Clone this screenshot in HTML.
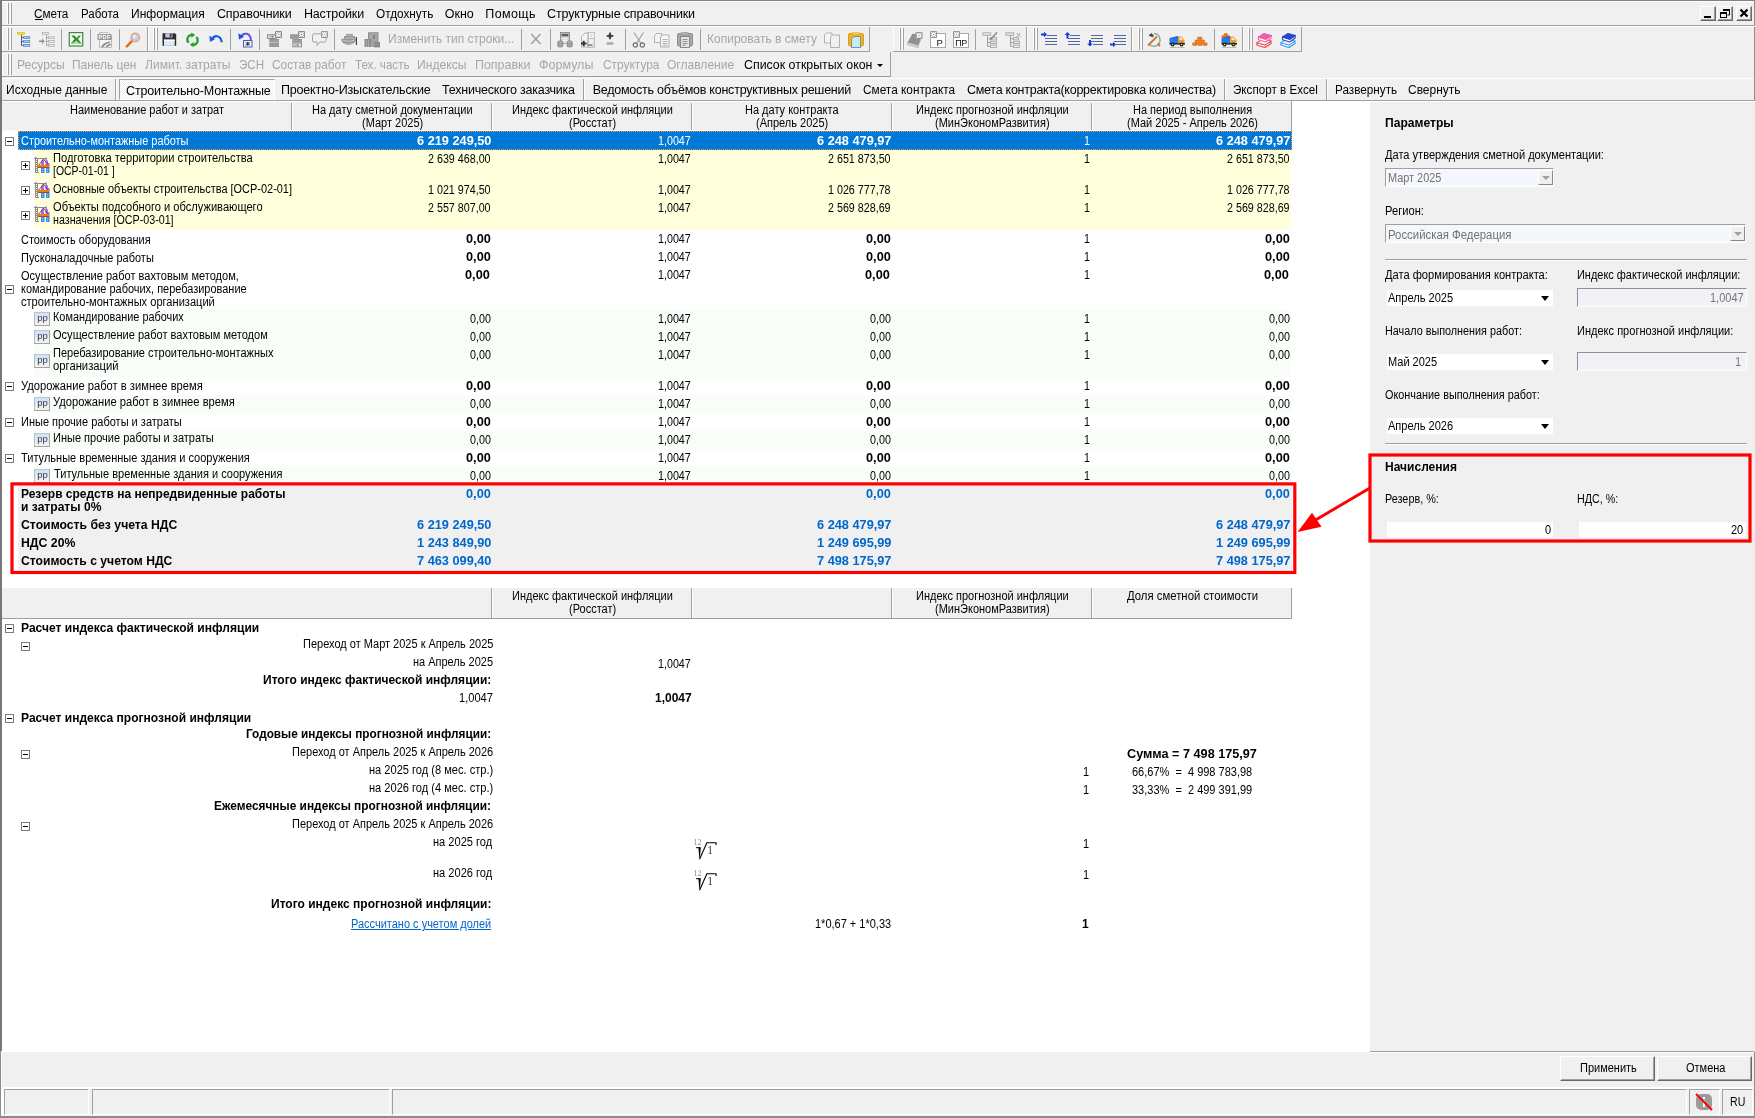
<!DOCTYPE html>
<html lang="ru"><head><meta charset="utf-8"><title>Смета</title><style>
html,body{margin:0;padding:0}
body{will-change:transform;width:1755px;height:1118px;overflow:hidden;background:#f0f0f0;position:relative;font-family:"Liberation Sans",sans-serif;color:#000}
body div,body span,body svg{position:absolute;box-sizing:border-box}
.t{font-size:12.5px;line-height:13px;white-space:pre}
.m{font-size:12px;line-height:14px;white-space:pre}
</style></head><body>
<div style="left:0px;top:0px;width:1755px;height:1px;background:#828282"></div>
<div style="left:2px;top:1px;width:1752px;height:1px;background:#fff"></div>
<div style="left:1754px;top:0px;width:1px;height:1116px;background:#8c8c8c"></div>
<div style="left:0px;top:0px;width:2px;height:1051px;background:#787878"></div>
<div style="left:7px;top:3px;width:1px;height:21px;background:#fff"></div>
<div style="left:8px;top:3px;width:1px;height:21px;background:#a0a0a0"></div>
<div style="left:10px;top:3px;width:1px;height:21px;background:#fff"></div>
<div style="left:11px;top:3px;width:1px;height:21px;background:#a0a0a0"></div>
<span class="m" style="top:7.00px;font-size:12.5px;left:34.3px;transform:scaleX(0.9372);transform-origin:0 0;">Смета</span>
<span class="m" style="top:7.00px;font-size:12.5px;left:80.8px;transform:scaleX(0.9188);transform-origin:0 0;">Работа</span>
<span class="m" style="top:7.00px;font-size:12.5px;left:130.9px;transform:scaleX(0.9641);transform-origin:0 0;">Информация</span>
<span class="m" style="top:7.00px;font-size:12.5px;letter-spacing:-0.093px;left:216.9px;">Справочники</span>
<span class="m" style="top:7.00px;font-size:12.5px;letter-spacing:-0.125px;left:303.9px;">Настройки</span>
<span class="m" style="top:7.00px;font-size:12.5px;left:375.8px;transform:scaleX(0.9427);transform-origin:0 0;">Отдохнуть</span>
<span class="m" style="top:7.00px;font-size:12.5px;letter-spacing:-0.049px;left:444.8px;">Окно</span>
<span class="m" style="top:7.00px;font-size:12.5px;letter-spacing:0.384px;left:485.3px;">Помощь</span>
<span class="m" style="top:7.00px;font-size:12.5px;letter-spacing:-0.165px;left:547.1px;">Структурные справочники</span>
<div style="left:35px;top:19px;width:8px;height:1px;background:#000"></div>
<div style="left:2px;top:25px;width:1753px;height:1px;background:#a0a0a0"></div>
<div style="left:2px;top:26px;width:1753px;height:1px;background:#fff"></div>
<div style="left:1700px;top:6px;width:16px;height:15px;background:#f0f0f0;border:1px solid #fff;border-right-color:#696969;border-bottom-color:#696969"><div style="left:0;top:0;right:0;bottom:0;border-right:1px solid #a0a0a0;border-bottom:1px solid #a0a0a0"></div><svg style="left:0;top:0" width="14" height="13" viewBox="0 0 14 13"><rect x="3" y="9" width="7" height="2" fill="#000"/></svg></div>
<div style="left:1717px;top:6px;width:16px;height:15px;background:#f0f0f0;border:1px solid #fff;border-right-color:#696969;border-bottom-color:#696969"><div style="left:0;top:0;right:0;bottom:0;border-right:1px solid #a0a0a0;border-bottom:1px solid #a0a0a0"></div><svg style="left:0;top:0" width="14" height="13" viewBox="0 0 14 13"><path d="M5.500 3h6v5h-2" fill="none" stroke="#000" stroke-width="1"/><rect x="5" y="2" width="7" height="2" fill="#000"/><rect x="2.500" y="6.500" width="6" height="4" fill="none" stroke="#000" stroke-width="1"/><rect x="2" y="5" width="7" height="2" fill="#000"/></svg></div>
<div style="left:1736px;top:6px;width:16px;height:15px;background:#f0f0f0;border:1px solid #fff;border-right-color:#696969;border-bottom-color:#696969"><div style="left:0;top:0;right:0;bottom:0;border-right:1px solid #a0a0a0;border-bottom:1px solid #a0a0a0"></div><svg style="left:0;top:0" width="14" height="13" viewBox="0 0 14 13"><path d="M3.500 2.500l7 7M10.500 2.500l-7 7" stroke="#000" stroke-width="2.200"/></svg></div>
<div style="left:2px;top:51px;width:146px;height:1px;background:#a0a0a0"></div>
<div style="left:147px;top:27px;width:1px;height:25px;background:#a0a0a0"></div>
<div style="left:2px;top:27px;width:1px;height:24px;background:#fff"></div>
<div style="left:148px;top:51px;width:722px;height:1px;background:#a0a0a0"></div>
<div style="left:869px;top:27px;width:1px;height:25px;background:#a0a0a0"></div>
<div style="left:148px;top:27px;width:1px;height:24px;background:#fff"></div>
<div style="left:893px;top:51px;width:134px;height:1px;background:#a0a0a0"></div>
<div style="left:1026px;top:27px;width:1px;height:25px;background:#a0a0a0"></div>
<div style="left:893px;top:27px;width:1px;height:24px;background:#fff"></div>
<div style="left:1027px;top:51px;width:105px;height:1px;background:#a0a0a0"></div>
<div style="left:1131px;top:27px;width:1px;height:25px;background:#a0a0a0"></div>
<div style="left:1027px;top:27px;width:1px;height:24px;background:#fff"></div>
<div style="left:1132px;top:51px;width:111px;height:1px;background:#a0a0a0"></div>
<div style="left:1242px;top:27px;width:1px;height:25px;background:#a0a0a0"></div>
<div style="left:1132px;top:27px;width:1px;height:24px;background:#fff"></div>
<div style="left:1243px;top:51px;width:59px;height:1px;background:#a0a0a0"></div>
<div style="left:1301px;top:27px;width:1px;height:25px;background:#a0a0a0"></div>
<div style="left:1243px;top:27px;width:1px;height:24px;background:#fff"></div>
<div style="left:7px;top:28px;width:1px;height:22px;background:#fff"></div>
<div style="left:8px;top:28px;width:1px;height:22px;background:#a0a0a0"></div>
<div style="left:10px;top:28px;width:1px;height:22px;background:#fff"></div>
<div style="left:11px;top:28px;width:1px;height:22px;background:#a0a0a0"></div>
<div style="left:153px;top:28px;width:1px;height:22px;background:#fff"></div>
<div style="left:154px;top:28px;width:1px;height:22px;background:#a0a0a0"></div>
<div style="left:156px;top:28px;width:1px;height:22px;background:#fff"></div>
<div style="left:157px;top:28px;width:1px;height:22px;background:#a0a0a0"></div>
<div style="left:899px;top:28px;width:1px;height:22px;background:#fff"></div>
<div style="left:900px;top:28px;width:1px;height:22px;background:#a0a0a0"></div>
<div style="left:902px;top:28px;width:1px;height:22px;background:#fff"></div>
<div style="left:903px;top:28px;width:1px;height:22px;background:#a0a0a0"></div>
<div style="left:1033px;top:28px;width:1px;height:22px;background:#fff"></div>
<div style="left:1034px;top:28px;width:1px;height:22px;background:#a0a0a0"></div>
<div style="left:1036px;top:28px;width:1px;height:22px;background:#fff"></div>
<div style="left:1037px;top:28px;width:1px;height:22px;background:#a0a0a0"></div>
<div style="left:1138px;top:28px;width:1px;height:22px;background:#fff"></div>
<div style="left:1139px;top:28px;width:1px;height:22px;background:#a0a0a0"></div>
<div style="left:1141px;top:28px;width:1px;height:22px;background:#fff"></div>
<div style="left:1142px;top:28px;width:1px;height:22px;background:#a0a0a0"></div>
<div style="left:1248px;top:28px;width:1px;height:22px;background:#fff"></div>
<div style="left:1249px;top:28px;width:1px;height:22px;background:#a0a0a0"></div>
<div style="left:1251px;top:28px;width:1px;height:22px;background:#fff"></div>
<div style="left:1252px;top:28px;width:1px;height:22px;background:#a0a0a0"></div>
<div style="left:61px;top:29px;width:1px;height:21px;background:#a0a0a0"></div>
<div style="left:90px;top:29px;width:1px;height:21px;background:#a0a0a0"></div>
<div style="left:119px;top:29px;width:1px;height:21px;background:#a0a0a0"></div>
<div style="left:230px;top:29px;width:1px;height:21px;background:#a0a0a0"></div>
<div style="left:259px;top:29px;width:1px;height:21px;background:#a0a0a0"></div>
<div style="left:334px;top:29px;width:1px;height:21px;background:#a0a0a0"></div>
<div style="left:521px;top:29px;width:1px;height:21px;background:#a0a0a0"></div>
<div style="left:550px;top:29px;width:1px;height:21px;background:#a0a0a0"></div>
<div style="left:625px;top:29px;width:1px;height:21px;background:#a0a0a0"></div>
<div style="left:700px;top:29px;width:1px;height:21px;background:#a0a0a0"></div>
<div style="left:975px;top:29px;width:1px;height:21px;background:#a0a0a0"></div>
<div style="left:1214px;top:29px;width:1px;height:21px;background:#a0a0a0"></div>
<svg style="left:16px;top:32px" width="16" height="16" viewBox="0 0 16 16"><path d="M5.500 2.500v11M5.500 5.500h2M5.500 9.500h2M5.500 13.300h2" stroke="#384c80" fill="none" stroke-width="0.900"/><rect x="1.300" y="0.400" width="7.200" height="1.900" fill="#f4e61c" stroke="#c8b400" stroke-width="0.500"/><rect x="7.600" y="4.700" width="6.200" height="1.900" fill="#a4c8f4" stroke="#5080c8" stroke-width="0.700"/><rect x="7.600" y="8.600" width="6.200" height="1.900" fill="#a4c8f4" stroke="#5080c8" stroke-width="0.700"/><rect x="7.600" y="12.400" width="6.200" height="1.900" fill="#a4c8f4" stroke="#5080c8" stroke-width="0.700"/></svg>
<svg style="left:39px;top:32px" width="16" height="16" viewBox="0 0 16 16"><path d="M7.500 2.500v11M7.500 5.500h2M7.500 9.500h2M7.500 13.300h2" stroke="#a0a0a0" fill="none" stroke-width="0.900"/><rect x="3.600" y="0.400" width="6" height="1.900" fill="#ececec" stroke="#a8a8a8" stroke-width="0.700"/><rect x="9.600" y="4.700" width="6" height="1.900" fill="#ececec" stroke="#a8a8a8" stroke-width="0.700"/><rect x="9.600" y="8.600" width="6" height="1.900" fill="#ececec" stroke="#a8a8a8" stroke-width="0.700"/><rect x="9.600" y="12.400" width="6" height="1.900" fill="#ececec" stroke="#a8a8a8" stroke-width="0.700"/><path d="M0 8.400h3v-1.900l2.800 2.700-2.800 2.700v-1.900h-3z" fill="#909090"/></svg>
<svg style="left:68px;top:32px" width="16" height="16" viewBox="0 0 16 16"><rect x="1.300" y="0.600" width="13.400" height="13.400" fill="#f4faf0" stroke="#3c8c3c" stroke-width="1.200"/><path d="M3.200 3.500l3.500 3.600-3.900 4.400h2.900l2.600-3 2.300 3h3l-3.700-4.400 3.200-3.600h-2.200l-2.400 2.500-2-2.500z" fill="#2e8c2e"/><path d="M3.200 11.500h9l-1-1.200h-7z" fill="#8cc88c"/></svg>
<svg style="left:97px;top:32px" width="16" height="16" viewBox="0 0 16 16"><path d="M2.5 0.5h9l3 3v12h-12z" fill="#f4f4f4" stroke="#b0b0b0" stroke-width="0.8"/><rect x="0.5" y="2" width="14" height="6" fill="#9a9a9a"/><text x="1.6" y="7.2" font-family="Liberation Sans" font-size="5.6" font-weight="bold" fill="#fff" letter-spacing="0.3">PDF</text><path d="M4 15c2-4 5-5 9-5.5v1.5c-3 .5-5 1.500-6.500 4zM8.500 15c1-2 3-3 5.500-3.300v1.500c-1.500 .3-2.500 .8-3.300 1.800z" fill="#909090"/></svg>
<svg style="left:125px;top:32px" width="16" height="16" viewBox="0 0 16 16"><path d="M1.800 14.300l6-6.200" stroke="#e07020" stroke-width="2.600" stroke-linecap="round"/><circle cx="10.300" cy="5.500" r="4.300" fill="#b8d0f8" stroke="#f0a070" stroke-width="1.400"/><circle cx="9.500" cy="4.600" r="1.800" fill="#e0ecff"/></svg>
<svg style="left:162px;top:32px" width="16" height="16" viewBox="0 0 16 16"><path d="M0.500 1.300h12.500l1.200 1.200v11.300h-13.700z" fill="#2c2c2c"/><rect x="3.300" y="1.300" width="7.200" height="4.200" fill="#c8c0e4"/><rect x="7.800" y="1.800" width="1.700" height="3" fill="#2c2c2c"/><rect x="2" y="7.600" width="10.700" height="6.200" fill="#d4eef4"/><rect x="2" y="7.600" width="10.700" height="1.400" fill="#fff"/></svg>
<svg style="left:185px;top:32px" width="16" height="16" viewBox="0 0 16 16"><path d="M7.200 2.800a4.700 4.700 0 0 0-3.500 8" fill="none" stroke="#28a028" stroke-width="2.200"/><path d="M7.800 13a4.700 4.700 0 0 0 3.500-8" fill="none" stroke="#28a028" stroke-width="2.200"/><path d="M6.300 0.600l4 2.400-4 2.700z" fill="#28a028"/><path d="M8.700 15.200l-4-2.400 4-2.700z" fill="#28a028"/></svg>
<svg style="left:209px;top:32px" width="16" height="16" viewBox="0 0 16 16"><path d="M3 7.500c2-4.800 8.500-4.800 9.800 2.700" fill="none" stroke="#1a5ce4" stroke-width="2.200"/><path d="M0.300 3.800l0.700 6.200 5-2.700z" fill="#1a5ce4"/></svg>
<svg style="left:238px;top:32px" width="16" height="16" viewBox="0 0 16 16"><path d="M3 5c2-4.800 9.500-4.800 10 3.500" fill="none" stroke="#6050e8" stroke-width="2"/><path d="M0.300 1.300l0.700 6.200 5-2.700z" fill="#2050e0"/><rect x="5.500" y="8.500" width="8.500" height="6.500" fill="#f8f8ff" stroke="#4060c0"/><path d="M7.500 10.300l4.500 3M12 10.300l-4.500 3M9.750 9.800v4" stroke="#202020" stroke-width="0.900"/></svg>
<svg style="left:267px;top:31px" width="16" height="17" viewBox="0 0 16 17"><g transform="translate(0,1)"><rect x="0.500" y="2.700" width="8.500" height="3.800" fill="#e4e4e4" stroke="#8c8c8c"/><path d="M2.500 4.600h4M5 3.600l1.500 1-1.500 1" stroke="#808080" stroke-width="0.800" fill="none"/><rect x="2.300" y="7" width="9.700" height="3.500" fill="#949494"/><rect x="2.300" y="11" width="9.700" height="4" fill="#949494"/><path d="M2.300 8.700h9.700M2.300 13h9.700" stroke="#b0b0b0" stroke-width="0.600"/><rect x="8.0" y="-1.0" width="7" height="7" fill="#8c8c8c"/><path d="M8.7 -0.2999999999999998l5.600 5.600M14.3 -0.2999999999999998l-5.600 5.600" stroke="#fff" stroke-width="0.800"/><circle cx="11.5" cy="2.5" r="2.200" fill="#fff"/><circle cx="11.5" cy="2.5" r="0.800" fill="#8c8c8c"/></g></svg>
<svg style="left:290px;top:31px" width="16" height="17" viewBox="0 0 16 17"><g transform="translate(0,1)"><rect x="0" y="2.300" width="9" height="4.500" fill="#949494"/><rect x="2.300" y="7" width="9.700" height="3.500" fill="#949494"/><path d="M0 4.500h9M2.300 8.700h9.700" stroke="#b0b0b0" stroke-width="0.600"/><rect x="2.800" y="11" width="8.700" height="3.800" fill="#e4e4e4" stroke="#8c8c8c"/><path d="M4.500 13h4M7 12l1.500 1-1.500 1" stroke="#808080" stroke-width="0.800" fill="none"/><rect x="8.0" y="-1.0" width="7" height="7" fill="#8c8c8c"/><path d="M8.7 -0.2999999999999998l5.600 5.600M14.3 -0.2999999999999998l-5.600 5.600" stroke="#fff" stroke-width="0.800"/><circle cx="11.5" cy="2.5" r="2.200" fill="#fff"/><circle cx="11.5" cy="2.5" r="0.800" fill="#8c8c8c"/></g></svg>
<svg style="left:312px;top:31px" width="16" height="17" viewBox="0 0 16 17"><g transform="translate(0,1)"><path d="M9 1.800h-7a1.500 1.500 0 0 0-1.500 1.500v5.200a1.500 1.500 0 0 0 1.500 1.500h3v3.500l3-3.500h4.500a1.500 1.500 0 0 0 1.500-1.500v-2.500" fill="none" stroke="#a4a4a4" stroke-width="1"/><rect x="9.0" y="-1.0" width="7" height="7" fill="#989898"/><path d="M9.7 -0.2999999999999998l5.600 5.600M15.3 -0.2999999999999998l-5.600 5.600" stroke="#fff" stroke-width="0.800"/><circle cx="12.5" cy="2.5" r="2.200" fill="#fff"/><circle cx="12.5" cy="2.5" r="0.800" fill="#989898"/></g></svg>
<svg style="left:341px;top:32px" width="16" height="16" viewBox="0 0 16 16"><rect x="5.500" y="2.200" width="6" height="2" fill="#b4b4b4" stroke="#8c8c8c" stroke-width="0.600"/><rect x="3" y="4.200" width="11" height="2.300" fill="#8c8c8c"/><path d="M5 5.300h7" stroke="#c4c4c4" stroke-width="0.700"/><path d="M0.300 6.800h14.500c0 3.500-3 6-7.300 6s-7.200-2.500-7.200-6z" fill="#949494"/><path d="M2 8.300c2.500 1.200 8.500 1.200 11 0" fill="none" stroke="#d0d0d0" stroke-width="1"/><path d="M3.500 11c2 1 6 1 8 0" fill="none" stroke="#bcbcbc" stroke-width="0.800"/><rect x="14.800" y="5" width="1.200" height="8" fill="#404040"/></svg>
<svg style="left:364px;top:32px" width="16" height="16" viewBox="0 0 16 16"><rect x="4.500" y="0.800" width="9.500" height="9" fill="#a8a8a8" stroke="#808080" stroke-width="0.800"/><path d="M9 3l2 4M11 3l-2 4" stroke="#707070" stroke-width="0.800"/><rect x="0.500" y="7" width="7" height="8" fill="#8c8c8c"/><path d="M2.500 8v7M4.500 8v7" stroke="#b8b8b8" stroke-width="0.700"/><rect x="10.500" y="10.500" width="5.500" height="4.500" fill="#909090" stroke="#707070" stroke-width="0.600"/><rect x="7.500" y="9" width="3" height="6" fill="#a0a0a0"/></svg>
<svg style="left:530px;top:32px" width="12" height="14" viewBox="0 0 12 14"><path d="M1.200 2l9.300 10M10.500 2l-9.300 10" stroke="#a0a0a0" stroke-width="1.500" fill="none"/></svg>
<svg style="left:557px;top:32px" width="16" height="16" viewBox="0 0 16 16"><rect x="3.500" y="0.500" width="9" height="11" fill="#d0d0d0" stroke="#808080" stroke-width="0.800"/><rect x="4.500" y="1.800" width="7" height="2.500" fill="#606060"/><path d="M5 6.500h6M5 8.500h6M5 10.500h6M7 5.500v6M9 5.500v6" stroke="#f8f8f8" stroke-width="0.800"/><g fill="#c8c8c8" stroke="#707070" stroke-width="0.800"><ellipse cx="3.300" cy="13.800" rx="2.800" ry="1.200"/><ellipse cx="3.300" cy="12" rx="2.800" ry="1.200"/><ellipse cx="3.300" cy="10.200" rx="2.800" ry="1.200"/><ellipse cx="12.700" cy="13.800" rx="2.800" ry="1.200"/><ellipse cx="12.700" cy="12" rx="2.800" ry="1.200"/><ellipse cx="12.700" cy="10.200" rx="2.800" ry="1.200"/></g></svg>
<svg style="left:580px;top:32px" width="16" height="16" viewBox="0 0 16 16"><path d="M1.500 4.500l3.500-3.500h3v14h-6.500z" fill="#f4f4f4" stroke="#a8a8a8" stroke-width="0.900"/><rect x="8.500" y="0.500" width="6" height="6" fill="#fafafa" stroke="#b0b0b0" stroke-width="0.800"/><path d="M10 2.500h3M10 4.200h3" stroke="#b8b8b8" stroke-width="0.600"/><path d="M8 7v8.300h6.300v-9" fill="none" stroke="#a8a8a8" stroke-width="0.900"/><path d="M1 11.500h5.500M3.750 8.800v5.500" stroke="#303030" stroke-width="1.800"/><rect x="7.500" y="12.200" width="5" height="1.800" fill="#909090"/></svg>
<svg style="left:606px;top:32px" width="8" height="16" viewBox="0 0 8 16"><path d="M4 1.200l2.700 2.700-2.700 2.700-2.700-2.700z" fill="#404040"/><path d="M0.700 3.900h6.600M4 0.600v6.600" stroke="#404040" stroke-width="1.800"/><rect x="0.500" y="10.300" width="7" height="2.400" rx="1" fill="#a8a8a8"/></svg>
<svg style="left:632px;top:32px" width="14" height="16" viewBox="0 0 14 16"><path d="M2 0.500l7 11M11.500 0.500l-7 11" stroke="#a0a0a0" stroke-width="1.200" fill="none"/><circle cx="3.300" cy="13" r="2.100" fill="none" stroke="#707070" stroke-width="1.200"/><circle cx="10.300" cy="13" r="2.100" fill="none" stroke="#707070" stroke-width="1.200"/></svg>
<svg style="left:654px;top:32px" width="16" height="16" viewBox="0 0 16 16"><path d="M0.500 3.500l2-2h5v9h-7z" fill="#f4f4f4" stroke="#a8a8a8" stroke-width="0.900"/><path d="M6.500 5l2-2h6.500v12h-8.500z" fill="#f8f8f8" stroke="#a8a8a8" stroke-width="0.900"/><path d="M8.500 7.500h5M8.500 9.500h5M8.500 11.500h5M8.500 13.200h5" stroke="#a0a0a0" stroke-width="0.800"/></svg>
<svg style="left:677px;top:32px" width="16" height="16" viewBox="0 0 16 16"><rect x="0.500" y="1.500" width="15" height="12.500" rx="1.500" fill="#a8a8a8" stroke="#8c8c8c"/><rect x="4.500" y="0.300" width="7" height="2.600" rx="0.800" fill="#b8b8b8" stroke="#909090" stroke-width="0.700"/><rect x="3.500" y="4.500" width="9" height="11" fill="#e4e4e4" stroke="#808080" stroke-width="0.900"/><path d="M5.500 7.500h5M5.500 9.500h5M5.500 11.500h5M5.500 13.300h3" stroke="#808080" stroke-width="0.800"/></svg>
<svg style="left:824px;top:32px" width="16" height="16" viewBox="0 0 16 16"><path d="M0.500 3l2-2h5.500v10h-7.500z" fill="#f6f6f6" stroke="#a8a8a8" stroke-width="0.900"/><path d="M6.500 5l2-2h7v12.500h-9z" fill="#f0f0f0" stroke="#a8a8a8" stroke-width="0.900"/></svg>
<svg style="left:848px;top:32px" width="16" height="16" viewBox="0 0 16 16"><rect x="0.500" y="1.500" width="15" height="12.500" rx="1.500" fill="#f8b020" stroke="#e09810"/><rect x="4.500" y="0.200" width="7" height="2.400" rx="0.800" fill="#f8d060" stroke="#e0a820" stroke-width="0.700"/><path d="M3.500 7l2.500-2.500h6.500v11h-9z" fill="#c8ecf0" stroke="#5890a0" stroke-width="0.900"/></svg>
<svg style="left:907px;top:32px" width="16" height="16" viewBox="0 0 16 16"><path d="M0.500 10.500l5-9 9.500 2.500-3.500 9.500z" fill="#909090"/><path d="M0.500 10.500l10.500 3 0 2.200-10.500-3z" fill="#d8d8d8" stroke="#a0a0a0" stroke-width="0.500"/><path d="M11 13.500l3.500-9.500v2.500l-3.500 9.200z" fill="#b8b8b8"/><rect x="8.5" y="0.0" width="7" height="7" fill="#989898"/><path d="M9.2 0.7000000000000002l5.600 5.600M14.8 0.7000000000000002l-5.600 5.600" stroke="#fff" stroke-width="0.800"/><circle cx="12" cy="3.5" r="2.200" fill="#fff"/><circle cx="12" cy="3.5" r="0.800" fill="#989898"/></svg>
<svg style="left:930px;top:31px" width="16" height="17" viewBox="0 0 16 17"><g transform="translate(0,1)"><rect x="0.500" y="1.500" width="15" height="14" fill="#fff" stroke="#a8a8a8"/><text x="6.500" y="14" font-family="Liberation Sans" font-size="9.500" fill="#101010">P</text><rect x="0.0" y="-1.0" width="7" height="7" fill="#989898"/><path d="M0.7000000000000002 -0.2999999999999998l5.600 5.600M6.3 -0.2999999999999998l-5.600 5.600" stroke="#fff" stroke-width="0.800"/><circle cx="3.5" cy="2.5" r="2.200" fill="#fff"/><circle cx="3.5" cy="2.5" r="0.800" fill="#989898"/></g></svg>
<svg style="left:953px;top:31px" width="16" height="17" viewBox="0 0 16 17"><g transform="translate(0,1)"><rect x="0.500" y="1.500" width="15" height="14" fill="#fff" stroke="#a8a8a8"/><text x="2.300" y="14" font-family="Liberation Sans" font-size="9" fill="#101010" letter-spacing="-0.400">ПР</text><rect x="0.0" y="-1.0" width="7" height="7" fill="#989898"/><path d="M0.7000000000000002 -0.2999999999999998l5.600 5.600M6.3 -0.2999999999999998l-5.600 5.600" stroke="#fff" stroke-width="0.800"/><circle cx="3.5" cy="2.5" r="2.200" fill="#fff"/><circle cx="3.5" cy="2.5" r="0.800" fill="#989898"/></g></svg>
<svg style="left:982px;top:32px" width="16" height="16" viewBox="0 0 16 16"><path d="M5.500 3v11.500M5.500 6.800h3M5.500 10.500h3M5.500 14.200h3" stroke="#a0a0a0" fill="none"/><rect x="0.800" y="0.800" width="8" height="2.400" fill="#e8e8e8" stroke="#a0a0a0" stroke-width="0.800"/><rect x="8.500" y="9.200" width="6" height="2.400" fill="#e8e8e8" stroke="#a0a0a0" stroke-width="0.800"/><rect x="8.500" y="13" width="6" height="2.400" fill="#e8e8e8" stroke="#a0a0a0" stroke-width="0.800"/><rect x="8.500" y="5.500" width="6" height="2.400" fill="#e8e8e8" stroke="#a0a0a0" stroke-width="0.800"/><path d="M9.500 6.500l5.500-6" stroke="#909090" stroke-width="1.800"/><path d="M8 8l1-2 1.200 1z" fill="#606060"/></svg>
<svg style="left:1005px;top:32px" width="16" height="16" viewBox="0 0 16 16"><path d="M5.500 3v11.500M5.500 6.800h3M5.500 10.500h3M5.500 14.200h3" stroke="#a0a0a0" fill="none"/><rect x="0.800" y="0.800" width="8" height="2.400" fill="#e8e8e8" stroke="#a0a0a0" stroke-width="0.800"/><rect x="8.500" y="9.200" width="6" height="2.400" fill="#e8e8e8" stroke="#a0a0a0" stroke-width="0.800"/><rect x="8.500" y="13" width="6" height="2.400" fill="#e8e8e8" stroke="#a0a0a0" stroke-width="0.800"/><rect x="8.500" y="5.500" width="5" height="2.400" fill="#e8e8e8" stroke="#a0a0a0" stroke-width="0.800"/><path d="M11.500 0.800l4 4M15.500 0.800l-4 4" stroke="#a0a0a0" stroke-width="1"/></svg>
<svg style="left:1041px;top:32px" width="16" height="16" viewBox="0 0 16 16"><path d="M6 3.500h10M4 6.500h12M4 9.500h12M4 12.500h12" stroke="#5868a0" stroke-width="1"/><path d="M0 1.500h3v-1.800l3 2.800-3 2.800v-1.800h-3z" fill="#1838d8"/></svg>
<svg style="left:1064px;top:32px" width="16" height="16" viewBox="0 0 16 16"><path d="M6 3.500h10M4 6.500h12M4 9.500h12M4 12.500h12" stroke="#5868a0" stroke-width="1"/><path d="M3 6.500v-3.500h-1.800l2.800-3 2.800 3h-1.800v3.500z" fill="#1838d8" transform="translate(-0.500 0)"/></svg>
<svg style="left:1087px;top:32px" width="16" height="16" viewBox="0 0 16 16"><path d="M4 3.500h12M4 6.500h12M4 9.500h12M6 12.500h10" stroke="#5868a0" stroke-width="1"/><path d="M2.500 8v3.500h-1.800l2.800 3 2.800-3h-1.800v-3.500z" fill="#1838d8" transform="translate(-0.500 0)"/></svg>
<svg style="left:1110px;top:32px" width="16" height="16" viewBox="0 0 16 16"><path d="M4 3.500h12M4 6.500h12M4 9.500h12M6 12.500h10" stroke="#5868a0" stroke-width="1"/><path d="M0 11.500h3v-1.800l3 2.800-3 2.800v-1.800h-3z" fill="#1838d8"/></svg>
<svg style="left:1146px;top:32px" width="16" height="16" viewBox="0 0 16 16"><path d="M8 1.500a6.500 6.500 0 0 1 2 12.500a7 7 0 0 1-6.500-1.500" fill="none" stroke="#90a8a8" stroke-width="1.500"/><path d="M2 13.500l9-9" stroke="#c87830" stroke-width="1.800"/><path d="M2.500 3.500l3-2.500 2.500 3-1.500 1.200z" fill="#404850"/><path d="M11.500 11.500l2.500 2.500" stroke="#c87830" stroke-width="1.800"/></svg>
<svg style="left:1169px;top:32px" width="16" height="16" viewBox="0 0 16 16"><rect x="0.500" y="6" width="8.500" height="5.500" fill="#2878e8"/><path d="M0.500 6l8.500-2v2z" fill="#2060c8"/><path d="M9 4.500h3.500l3 3.500v4h-6.500z" fill="#f09828"/><path d="M10.500 5.500h2l1.800 2.500h-3.800z" fill="#d8ecf8"/><rect x="0.500" y="11" width="15.500" height="1.600" fill="#303030"/><circle cx="3.500" cy="12.500" r="1.900" fill="#181818"/><circle cx="12.500" cy="12.500" r="1.900" fill="#181818"/><circle cx="3.500" cy="12.500" r="0.800" fill="#f0e060"/><circle cx="12.500" cy="12.500" r="0.800" fill="#f0e060"/><rect x="1" y="15" width="14.500" height="0.800" fill="#b0b0b0"/></svg>
<svg style="left:1192px;top:32px" width="16" height="16" viewBox="0 0 16 16"><g fill="#f08020" stroke="#c85800" stroke-width="0.500"><rect x="0.500" y="10.800" width="4.500" height="2.600" rx="0.800"/><rect x="5.600" y="10.800" width="4.500" height="2.600" rx="0.800"/><rect x="10.700" y="10.800" width="4.500" height="2.600" rx="0.800"/><rect x="3" y="7.900" width="4.500" height="2.600" rx="0.800"/><rect x="8.100" y="7.900" width="4.500" height="2.600" rx="0.800"/><rect x="5.500" y="5" width="4.500" height="2.600" rx="0.800"/></g></svg>
<svg style="left:1221px;top:32px" width="16" height="16" viewBox="0 0 16 16"><g fill="#f08020" stroke="#c85800" stroke-width="0.500"><rect x="1" y="3.500" width="3.500" height="2.500" rx="0.800"/><rect x="5" y="3.500" width="3.500" height="2.500" rx="0.800"/><rect x="3" y="1.500" width="3.500" height="2.500" rx="0.800"/></g><rect x="0.500" y="6" width="8.500" height="5.500" fill="#2878e8"/><path d="M0.500 6l8.500-2v2z" fill="#2060c8"/><path d="M9 4.500h3.500l3 3.500v4h-6.500z" fill="#f09828"/><path d="M10.500 5.500h2l1.800 2.500h-3.800z" fill="#d8ecf8"/><rect x="0.500" y="11" width="15.500" height="1.600" fill="#303030"/><circle cx="3.500" cy="12.500" r="1.900" fill="#181818"/><circle cx="12.500" cy="12.500" r="1.900" fill="#181818"/><circle cx="3.500" cy="12.500" r="0.800" fill="#f0e060"/><circle cx="12.500" cy="12.500" r="0.800" fill="#f0e060"/><rect x="1" y="15" width="14.500" height="0.800" fill="#b0b0b0"/></svg>
<svg style="left:1256px;top:32px" width="16" height="16" viewBox="0 0 16 16"><path d="M1 10.500v2.500l8 2.500 6-4v-2.500l-6 4z" fill="#fff" stroke="#f04848" stroke-width="1.300" stroke-linejoin="round"/><path d="M1 10.500l6-3 8 1.500-6 4z" fill="#fff" stroke="#f04848" stroke-width="1"/><path d="M2.500 5v2.800l7 2.200 5.500-3.800v-2.700l-5.500 3.700z" fill="#fff" stroke="#f060a8" stroke-width="1.200" stroke-linejoin="round"/><path d="M2.500 5l5.500-3.500 7.500 2-5.500 3.700z" fill="#f060a8" stroke="#f060a8" stroke-width="1.200" stroke-linejoin="round"/></svg>
<svg style="left:1280px;top:32px" width="16" height="16" viewBox="0 0 16 16"><path d="M1 10.500v2.500l8 2.500 6-4v-2.500l-6 4z" fill="#fff" stroke="#38a0e8" stroke-width="1.300" stroke-linejoin="round"/><path d="M1 10.500l6-3 8 1.500-6 4z" fill="#fff" stroke="#38a0e8" stroke-width="1"/><path d="M2.500 5v2.800l7 2.200 5.500-3.800v-2.700l-5.500 3.700z" fill="#fff" stroke="#2848c8" stroke-width="1.200" stroke-linejoin="round"/><path d="M2.500 5l5.500-3.500 7.500 2-5.500 3.700z" fill="#2848c8" stroke="#2848c8" stroke-width="1.200" stroke-linejoin="round"/></svg>
<span class="m" style="top:32.00px;font-size:13px;color:#a6a6a6;left:387.9px;transform:scaleX(0.9231);transform-origin:0 0;">Изменить тип строки...</span>
<span class="m" style="top:32.00px;font-size:13px;color:#a6a6a6;left:707.3px;transform:scaleX(0.9238);transform-origin:0 0;">Копировать в смету</span>
<div style="left:2px;top:76px;width:889px;height:1px;background:#a0a0a0"></div>
<div style="left:890px;top:52px;width:1px;height:25px;background:#a0a0a0"></div>
<div style="left:2px;top:52px;width:1px;height:24px;background:#fff"></div>
<div style="left:7px;top:54px;width:1px;height:21px;background:#fff"></div>
<div style="left:8px;top:54px;width:1px;height:21px;background:#a0a0a0"></div>
<div style="left:10px;top:54px;width:1px;height:21px;background:#fff"></div>
<div style="left:11px;top:54px;width:1px;height:21px;background:#a0a0a0"></div>
<span class="m" style="top:58.00px;font-size:13px;color:#a6a6a6;left:16.6px;transform:scaleX(0.9324);transform-origin:0 0;">Ресурсы</span>
<span class="m" style="top:58.00px;font-size:13px;color:#a6a6a6;left:72.3px;transform:scaleX(0.9169);transform-origin:0 0;">Панель цен</span>
<span class="m" style="top:58.00px;font-size:13px;color:#a6a6a6;left:145.3px;transform:scaleX(0.9276);transform-origin:0 0;">Лимит. затраты</span>
<span class="m" style="top:58.00px;font-size:13px;color:#a6a6a6;left:239.3px;transform:scaleX(0.8924);transform-origin:0 0;">ЭСН</span>
<span class="m" style="top:58.00px;font-size:13px;color:#a6a6a6;left:272.3px;transform:scaleX(0.9131);transform-origin:0 0;">Состав работ</span>
<span class="m" style="top:58.00px;font-size:13px;color:#a6a6a6;left:354.8px;transform:scaleX(0.8918);transform-origin:0 0;">Тех. часть</span>
<span class="m" style="top:58.00px;font-size:13px;color:#a6a6a6;left:417.3px;transform:scaleX(0.9318);transform-origin:0 0;">Индексы</span>
<span class="m" style="top:58.00px;font-size:13px;color:#a6a6a6;left:475.3px;transform:scaleX(0.9562);transform-origin:0 0;">Поправки</span>
<span class="m" style="top:58.00px;font-size:13px;color:#a6a6a6;left:539.3px;transform:scaleX(0.9615);transform-origin:0 0;">Формулы</span>
<span class="m" style="top:58.00px;font-size:13px;color:#a6a6a6;left:602.8px;transform:scaleX(0.9159);transform-origin:0 0;">Структура</span>
<span class="m" style="top:58.00px;font-size:13px;color:#a6a6a6;left:667.3px;transform:scaleX(0.9271);transform-origin:0 0;">Оглавление</span>
<span class="m" style="top:58.00px;font-size:13px;left:744.3px;transform:scaleX(0.9517);transform-origin:0 0;">Список открытых окон</span>
<div style="left:877px;top:64px;width:0;height:0;border-left:3.500px solid transparent;border-right:3.500px solid transparent;border-top:3.500px solid #000"></div>
<div style="left:2px;top:78px;width:1752px;height:1px;background:#fff"></div>
<div style="left:2px;top:100px;width:1753px;height:1px;background:#a0a0a0"></div>
<div style="left:119px;top:79px;width:156px;height:21px;background:repeating-conic-gradient(#fff 0% 25%,#f0f0f0 0% 50%) 0 0/2px 2px;border-top:1px solid #a0a0a0;border-left:1px solid #a0a0a0;border-right:1px solid #fff;border-bottom:1px solid #fff"></div>
<span class="m" style="top:83.00px;font-size:12.5px;left:6.3px;transform:scaleX(0.9600);transform-origin:0 0;">Исходные данные</span>
<span class="m" style="top:84.00px;font-size:12.5px;letter-spacing:-0.157px;left:126.1px;">Строительно-Монтажные</span>
<span class="m" style="top:83.00px;font-size:12.5px;letter-spacing:-0.153px;left:280.9px;">Проектно-Изыскательские</span>
<span class="m" style="top:83.00px;font-size:12.5px;letter-spacing:-0.214px;left:442.1px;">Технического заказчика</span>
<span class="m" style="top:83.00px;font-size:12.5px;letter-spacing:-0.234px;left:592.7px;">Ведомость объёмов конструктивных решений</span>
<span class="m" style="top:83.00px;font-size:12.5px;left:863.0px;transform:scaleX(0.9466);transform-origin:0 0;">Смета контракта</span>
<span class="m" style="top:83.00px;font-size:12.5px;letter-spacing:-0.264px;left:967.0px;">Смета контракта(корректировка количества)</span>
<span class="m" style="top:83.00px;font-size:12.5px;left:1233.3px;transform:scaleX(0.9317);transform-origin:0 0;">Экспорт в Excel</span>
<span class="m" style="top:83.00px;font-size:12.5px;left:1335.3px;transform:scaleX(0.9386);transform-origin:0 0;">Развернуть</span>
<span class="m" style="top:83.00px;font-size:12.5px;left:1408.3px;transform:scaleX(0.9557);transform-origin:0 0;">Свернуть</span>
<div style="left:115px;top:79px;width:1px;height:21px;background:#a0a0a0"></div>
<div style="left:116px;top:79px;width:1px;height:21px;background:#fff"></div>
<div style="left:583px;top:79px;width:1px;height:21px;background:#a0a0a0"></div>
<div style="left:584px;top:79px;width:1px;height:21px;background:#fff"></div>
<div style="left:1224px;top:79px;width:1px;height:21px;background:#a0a0a0"></div>
<div style="left:1225px;top:79px;width:1px;height:21px;background:#fff"></div>
<div style="left:1326px;top:79px;width:1px;height:21px;background:#a0a0a0"></div>
<div style="left:1327px;top:79px;width:1px;height:21px;background:#fff"></div>
<div style="left:2px;top:101px;width:1368px;height:951px;background:#fff"></div>
<div style="left:2px;top:101px;width:1289px;height:30px;background:#f0f0f0;border-top:1px solid #fff;border-bottom:1px solid #fafafa"></div>
<div style="left:1291px;top:100px;width:1px;height:32px;background:#a0a0a0"></div>
<div style="left:291px;top:103px;width:1px;height:27px;background:#a0a0a0"></div>
<div style="left:292px;top:103px;width:1px;height:27px;background:#fff"></div>
<div style="left:491px;top:103px;width:1px;height:27px;background:#a0a0a0"></div>
<div style="left:492px;top:103px;width:1px;height:27px;background:#fff"></div>
<div style="left:691px;top:103px;width:1px;height:27px;background:#a0a0a0"></div>
<div style="left:692px;top:103px;width:1px;height:27px;background:#fff"></div>
<div style="left:891px;top:103px;width:1px;height:27px;background:#a0a0a0"></div>
<div style="left:892px;top:103px;width:1px;height:27px;background:#fff"></div>
<div style="left:1091px;top:103px;width:1px;height:27px;background:#a0a0a0"></div>
<div style="left:1092px;top:103px;width:1px;height:27px;background:#fff"></div>
<span class="t" style="top:104.00px;left:70.49px;transform-origin:0 0;transform:scaleX(0.88);">Наименование работ и затрат</span>
<span class="t" style="top:104.00px;left:311.89px;transform-origin:0 0;transform:scaleX(0.88);">На дату сметной документации</span>
<span class="t" style="top:117.00px;left:361.61px;transform-origin:0 0;transform:scaleX(0.88);">(Март 2025)</span>
<span class="t" style="top:104.00px;left:511.75px;transform-origin:0 0;transform:scaleX(0.88);">Индекс фактической инфляции</span>
<span class="t" style="top:117.00px;left:568.63px;transform-origin:0 0;transform:scaleX(0.88);">(Росстат)</span>
<span class="t" style="top:104.00px;left:745.45px;transform-origin:0 0;transform:scaleX(0.88);">На дату контракта</span>
<span class="t" style="top:117.00px;left:756.11px;transform-origin:0 0;transform:scaleX(0.88);">(Апрель 2025)</span>
<span class="t" style="top:104.00px;left:915.84px;transform-origin:0 0;transform:scaleX(0.88);">Индекс прогнозной инфляции</span>
<span class="t" style="top:117.00px;left:934.92px;transform-origin:0 0;transform:scaleX(0.88);">(МинЭкономРазвития)</span>
<span class="t" style="top:104.00px;left:1132.61px;transform-origin:0 0;transform:scaleX(0.88);">На период выполнения</span>
<span class="t" style="top:117.00px;left:1126.69px;transform-origin:0 0;transform:scaleX(0.88);">(Май 2025 - Апрель 2026)</span>
<div style="left:18px;top:131px;width:1274px;height:19px;background:#0078d7;border:1px dotted #ff9a3c"></div>
<div style="left:5px;top:137px;width:9px;height:9px;border:1px solid #7c7c7c;background:#fff"><div style="left:1px;top:3px;width:5px;height:1px;background:#000"></div></div>
<span class="t" style="top:135.00px;color:#fff;left:21.1px;transform-origin:0 0;transform:scaleX(0.8732);">Строительно-монтажные работы</span>
<span class="t" style="top:135.00px;font-weight:bold;color:#fff;left:416.54px;transform-origin:0 0;transform:scaleX(1.02);">6 219 249,50</span>
<span class="t" style="top:135.00px;color:#fff;left:657.53px;transform-origin:0 0;transform:scaleX(0.857);">1,0047</span>
<span class="t" style="top:135.00px;font-weight:bold;color:#fff;left:816.54px;transform-origin:0 0;transform:scaleX(1.02);">6 248 479,97</span>
<span class="t" style="top:135.00px;color:#fff;left:1083.54px;transform-origin:0 0;transform:scaleX(0.857);">1</span>
<span class="t" style="top:135.00px;font-weight:bold;color:#fff;left:1215.54px;transform-origin:0 0;transform:scaleX(1.02);">6 248 479,97</span>
<div style="left:34px;top:150px;width:1257px;height:80px;background:#ffffdb"></div>
<div style="left:21px;top:161px;width:9px;height:9px;border:1px solid #7c7c7c;background:#fff"><div style="left:1px;top:3px;width:5px;height:1px;background:#000"></div><div style="left:3px;top:1px;width:1px;height:5px;background:#000"></div></div>
<svg style="left:34px;top:157px" width="16" height="16" viewBox="0 0 16 16"><path d="M7 8.500v-4l1.500-2h1.500v6z" fill="#9a70f0"/><path d="M11.500 0.500h1.500v3h1v2.500h1.500v3h-4z" fill="#9a70f0"/><path d="M0 1.500h13" stroke="#8c8c8c"/><path d="M1.500 1v14.500h3.500M3.500 2v13" stroke="#8c8c8c" fill="none"/><path d="M1.500 3.500h2M1.500 5.500h2M1.500 7.500h2M1.500 9.500h2M1.500 11.500h2M1.500 13.500h2" stroke="#8c8c8c"/><circle cx="1.800" cy="1" r="1" fill="#a070f0"/><path d="M9.500 2l-5 6.500M9.500 2l5 6.500" stroke="#80202c" stroke-width="0.800"/><rect x="4" y="8" width="11.500" height="2" fill="#f47a10"/><rect x="4" y="10" width="11.500" height="1" fill="#b04a18"/><rect x="7" y="11" width="3.500" height="5" fill="#2a90fa"/><rect x="12" y="11" width="3.500" height="5" fill="#2a90fa"/><path d="M8 12h1v1h-1zM8 14h1v1h-1zM13 12h1v1h-1zM13 14h1v1h-1z" fill="#a8d4ff"/></svg>
<span class="t" style="top:152.00px;left:52.9px;transform-origin:0 0;transform:scaleX(0.8926);">Подготовка территории строительства</span>
<span class="t" style="top:165.00px;left:53.3px;transform-origin:0 0;transform:scaleX(0.8365);">[ОСР-01-01 ]</span>
<span class="t" style="top:153.00px;left:428.14px;transform-origin:0 0;transform:scaleX(0.857);">2 639 468,00</span>
<span class="t" style="top:153.00px;left:657.53px;transform-origin:0 0;transform:scaleX(0.857);">1,0047</span>
<span class="t" style="top:153.00px;left:828.14px;transform-origin:0 0;transform:scaleX(0.857);">2 651 873,50</span>
<span class="t" style="top:153.00px;left:1083.54px;transform-origin:0 0;transform:scaleX(0.857);">1</span>
<span class="t" style="top:153.00px;left:1227.24px;transform-origin:0 0;transform:scaleX(0.857);">2 651 873,50</span>
<div style="left:21px;top:186px;width:9px;height:9px;border:1px solid #7c7c7c;background:#fff"><div style="left:1px;top:3px;width:5px;height:1px;background:#000"></div><div style="left:3px;top:1px;width:1px;height:5px;background:#000"></div></div>
<svg style="left:34px;top:182px" width="16" height="16" viewBox="0 0 16 16"><path d="M7 8.500v-4l1.500-2h1.500v6z" fill="#9a70f0"/><path d="M11.500 0.500h1.500v3h1v2.500h1.500v3h-4z" fill="#9a70f0"/><path d="M0 1.500h13" stroke="#8c8c8c"/><path d="M1.500 1v14.500h3.500M3.500 2v13" stroke="#8c8c8c" fill="none"/><path d="M1.500 3.500h2M1.500 5.500h2M1.500 7.500h2M1.500 9.500h2M1.500 11.500h2M1.500 13.500h2" stroke="#8c8c8c"/><circle cx="1.800" cy="1" r="1" fill="#a070f0"/><path d="M9.500 2l-5 6.500M9.500 2l5 6.500" stroke="#80202c" stroke-width="0.800"/><rect x="4" y="8" width="11.500" height="2" fill="#f47a10"/><rect x="4" y="10" width="11.500" height="1" fill="#b04a18"/><rect x="7" y="11" width="3.500" height="5" fill="#2a90fa"/><rect x="12" y="11" width="3.500" height="5" fill="#2a90fa"/><path d="M8 12h1v1h-1zM8 14h1v1h-1zM13 12h1v1h-1zM13 14h1v1h-1z" fill="#a8d4ff"/></svg>
<span class="t" style="top:183.00px;left:52.9px;transform-origin:0 0;transform:scaleX(0.8758);">Основные объекты строительства [ОСР-02-01]</span>
<span class="t" style="top:184.00px;left:428.14px;transform-origin:0 0;transform:scaleX(0.857);">1 021 974,50</span>
<span class="t" style="top:184.00px;left:657.53px;transform-origin:0 0;transform:scaleX(0.857);">1,0047</span>
<span class="t" style="top:184.00px;left:828.14px;transform-origin:0 0;transform:scaleX(0.857);">1 026 777,78</span>
<span class="t" style="top:184.00px;left:1083.54px;transform-origin:0 0;transform:scaleX(0.857);">1</span>
<span class="t" style="top:184.00px;left:1227.24px;transform-origin:0 0;transform:scaleX(0.857);">1 026 777,78</span>
<div style="left:21px;top:211px;width:9px;height:9px;border:1px solid #7c7c7c;background:#fff"><div style="left:1px;top:3px;width:5px;height:1px;background:#000"></div><div style="left:3px;top:1px;width:1px;height:5px;background:#000"></div></div>
<svg style="left:34px;top:206px" width="16" height="16" viewBox="0 0 16 16"><path d="M7 8.500v-4l1.500-2h1.500v6z" fill="#9a70f0"/><path d="M11.500 0.500h1.500v3h1v2.500h1.500v3h-4z" fill="#9a70f0"/><path d="M0 1.500h13" stroke="#8c8c8c"/><path d="M1.500 1v14.500h3.500M3.500 2v13" stroke="#8c8c8c" fill="none"/><path d="M1.500 3.500h2M1.500 5.500h2M1.500 7.500h2M1.500 9.500h2M1.500 11.500h2M1.500 13.500h2" stroke="#8c8c8c"/><circle cx="1.800" cy="1" r="1" fill="#a070f0"/><path d="M9.500 2l-5 6.500M9.500 2l5 6.500" stroke="#80202c" stroke-width="0.800"/><rect x="4" y="8" width="11.500" height="2" fill="#f47a10"/><rect x="4" y="10" width="11.500" height="1" fill="#b04a18"/><rect x="7" y="11" width="3.500" height="5" fill="#2a90fa"/><rect x="12" y="11" width="3.500" height="5" fill="#2a90fa"/><path d="M8 12h1v1h-1zM8 14h1v1h-1zM13 12h1v1h-1zM13 14h1v1h-1z" fill="#a8d4ff"/></svg>
<span class="t" style="top:201.00px;left:52.9px;transform-origin:0 0;transform:scaleX(0.8893);">Объекты подсобного и обслуживающего</span>
<span class="t" style="top:214.00px;left:53.1px;transform-origin:0 0;transform:scaleX(0.8566);">назначения [ОСР-03-01]</span>
<span class="t" style="top:202.00px;left:428.14px;transform-origin:0 0;transform:scaleX(0.857);">2 557 807,00</span>
<span class="t" style="top:202.00px;left:657.53px;transform-origin:0 0;transform:scaleX(0.857);">1,0047</span>
<span class="t" style="top:202.00px;left:828.14px;transform-origin:0 0;transform:scaleX(0.857);">2 569 828,69</span>
<span class="t" style="top:202.00px;left:1083.54px;transform-origin:0 0;transform:scaleX(0.857);">1</span>
<span class="t" style="top:202.00px;left:1227.24px;transform-origin:0 0;transform:scaleX(0.857);">2 569 828,69</span>
<span class="t" style="top:234.00px;left:21.1px;transform-origin:0 0;transform:scaleX(0.8749);">Стоимость оборудования</span>
<span class="t" style="top:233.00px;font-weight:bold;left:466.17px;transform-origin:0 0;transform:scaleX(1.02);">0,00</span>
<span class="t" style="top:233.00px;left:657.53px;transform-origin:0 0;transform:scaleX(0.857);">1,0047</span>
<span class="t" style="top:233.00px;font-weight:bold;left:866.17px;transform-origin:0 0;transform:scaleX(1.02);">0,00</span>
<span class="t" style="top:233.00px;left:1083.54px;transform-origin:0 0;transform:scaleX(0.857);">1</span>
<span class="t" style="top:233.00px;font-weight:bold;left:1265.17px;transform-origin:0 0;transform:scaleX(1.02);">0,00</span>
<span class="t" style="top:252.00px;left:21.1px;transform-origin:0 0;transform:scaleX(0.8779);">Пусконаладочные работы</span>
<span class="t" style="top:251.00px;font-weight:bold;left:466.17px;transform-origin:0 0;transform:scaleX(1.02);">0,00</span>
<span class="t" style="top:251.00px;left:657.53px;transform-origin:0 0;transform:scaleX(0.857);">1,0047</span>
<span class="t" style="top:251.00px;font-weight:bold;left:866.17px;transform-origin:0 0;transform:scaleX(1.02);">0,00</span>
<span class="t" style="top:251.00px;left:1083.54px;transform-origin:0 0;transform:scaleX(0.857);">1</span>
<span class="t" style="top:251.00px;font-weight:bold;left:1265.17px;transform-origin:0 0;transform:scaleX(1.02);">0,00</span>
<div style="left:5px;top:285px;width:9px;height:9px;border:1px solid #7c7c7c;background:#fff"><div style="left:1px;top:3px;width:5px;height:1px;background:#000"></div></div>
<span class="t" style="top:270.00px;left:21.1px;transform-origin:0 0;transform:scaleX(0.8831);">Осуществление работ вахтовым методом,</span>
<span class="t" style="top:283.00px;left:21.1px;transform-origin:0 0;transform:scaleX(0.8762);">командирование рабочих, перебазирование</span>
<span class="t" style="top:296.00px;left:21.1px;transform-origin:0 0;transform:scaleX(0.8865);">строительно-монтажных организаций</span>
<span class="t" style="top:269.00px;font-weight:bold;left:465.17px;transform-origin:0 0;transform:scaleX(1.02);">0,00</span>
<span class="t" style="top:269.00px;left:657.53px;transform-origin:0 0;transform:scaleX(0.857);">1,0047</span>
<span class="t" style="top:269.00px;font-weight:bold;left:865.17px;transform-origin:0 0;transform:scaleX(1.02);">0,00</span>
<span class="t" style="top:269.00px;left:1083.54px;transform-origin:0 0;transform:scaleX(0.857);">1</span>
<span class="t" style="top:269.00px;font-weight:bold;left:1264.17px;transform-origin:0 0;transform:scaleX(1.02);">0,00</span>
<div style="left:34px;top:310px;width:1257px;height:67px;background:#f8fdf8"></div>
<div style="left:34px;top:312px;width:16px;height:14px;background:linear-gradient(#cde0ff,#dce8fb 45%,#f0f0f0 80%);border:1px solid #a4a4a4;border-top-color:#c4c4c4;border-left-color:#bcbcbc"><span style="left:2.300px;top:-1.500px;font-size:9.500px;line-height:12px;letter-spacing:-0.200px;color:#3c3c3c">pp</span></div>
<span class="t" style="top:311.00px;left:52.9px;transform-origin:0 0;transform:scaleX(0.8713);">Командирование рабочих</span>
<span class="t" style="top:313.00px;left:469.84px;transform-origin:0 0;transform:scaleX(0.857);">0,00</span>
<span class="t" style="top:313.00px;left:657.53px;transform-origin:0 0;transform:scaleX(0.857);">1,0047</span>
<span class="t" style="top:313.00px;left:869.84px;transform-origin:0 0;transform:scaleX(0.857);">0,00</span>
<span class="t" style="top:313.00px;left:1083.54px;transform-origin:0 0;transform:scaleX(0.857);">1</span>
<span class="t" style="top:313.00px;left:1268.94px;transform-origin:0 0;transform:scaleX(0.857);">0,00</span>
<div style="left:34px;top:330px;width:16px;height:14px;background:linear-gradient(#cde0ff,#dce8fb 45%,#f0f0f0 80%);border:1px solid #a4a4a4;border-top-color:#c4c4c4;border-left-color:#bcbcbc"><span style="left:2.300px;top:-1.500px;font-size:9.500px;line-height:12px;letter-spacing:-0.200px;color:#3c3c3c">pp</span></div>
<span class="t" style="top:329.00px;left:52.9px;transform-origin:0 0;transform:scaleX(0.8833);">Осуществление работ вахтовым методом</span>
<span class="t" style="top:331.00px;left:469.84px;transform-origin:0 0;transform:scaleX(0.857);">0,00</span>
<span class="t" style="top:331.00px;left:657.53px;transform-origin:0 0;transform:scaleX(0.857);">1,0047</span>
<span class="t" style="top:331.00px;left:869.84px;transform-origin:0 0;transform:scaleX(0.857);">0,00</span>
<span class="t" style="top:331.00px;left:1083.54px;transform-origin:0 0;transform:scaleX(0.857);">1</span>
<span class="t" style="top:331.00px;left:1268.94px;transform-origin:0 0;transform:scaleX(0.857);">0,00</span>
<div style="left:34px;top:354px;width:16px;height:14px;background:linear-gradient(#cde0ff,#dce8fb 45%,#f0f0f0 80%);border:1px solid #a4a4a4;border-top-color:#c4c4c4;border-left-color:#bcbcbc"><span style="left:2.300px;top:-1.500px;font-size:9.500px;line-height:12px;letter-spacing:-0.200px;color:#3c3c3c">pp</span></div>
<span class="t" style="top:347.00px;left:53.1px;transform-origin:0 0;transform:scaleX(0.8814);">Перебазирование строительно-монтажных</span>
<span class="t" style="top:360.00px;left:53.3px;transform-origin:0 0;transform:scaleX(0.9006);">организаций</span>
<span class="t" style="top:349.00px;left:469.84px;transform-origin:0 0;transform:scaleX(0.857);">0,00</span>
<span class="t" style="top:349.00px;left:657.53px;transform-origin:0 0;transform:scaleX(0.857);">1,0047</span>
<span class="t" style="top:349.00px;left:869.84px;transform-origin:0 0;transform:scaleX(0.857);">0,00</span>
<span class="t" style="top:349.00px;left:1083.54px;transform-origin:0 0;transform:scaleX(0.857);">1</span>
<span class="t" style="top:349.00px;left:1268.94px;transform-origin:0 0;transform:scaleX(0.857);">0,00</span>
<div style="left:5px;top:382px;width:9px;height:9px;border:1px solid #7c7c7c;background:#fff"><div style="left:1px;top:3px;width:5px;height:1px;background:#000"></div></div>
<span class="t" style="top:380.00px;left:21.1px;transform-origin:0 0;transform:scaleX(0.8949);">Удорожание работ в зимнее время</span>
<span class="t" style="top:380.00px;font-weight:bold;left:466.17px;transform-origin:0 0;transform:scaleX(1.02);">0,00</span>
<span class="t" style="top:380.00px;left:657.53px;transform-origin:0 0;transform:scaleX(0.857);">1,0047</span>
<span class="t" style="top:380.00px;font-weight:bold;left:866.17px;transform-origin:0 0;transform:scaleX(1.02);">0,00</span>
<span class="t" style="top:380.00px;left:1083.54px;transform-origin:0 0;transform:scaleX(0.857);">1</span>
<span class="t" style="top:380.00px;font-weight:bold;left:1265.17px;transform-origin:0 0;transform:scaleX(1.02);">0,00</span>
<div style="left:34px;top:395px;width:1258px;height:18px;background:#f8fdf8"></div>
<div style="left:34px;top:397px;width:16px;height:14px;background:linear-gradient(#cde0ff,#dce8fb 45%,#f0f0f0 80%);border:1px solid #a4a4a4;border-top-color:#c4c4c4;border-left-color:#bcbcbc"><span style="left:2.300px;top:-1.500px;font-size:9.500px;line-height:12px;letter-spacing:-0.200px;color:#3c3c3c">pp</span></div>
<span class="t" style="top:396.00px;left:53.1px;transform-origin:0 0;transform:scaleX(0.8949);">Удорожание работ в зимнее время</span>
<span class="t" style="top:398.00px;left:469.84px;transform-origin:0 0;transform:scaleX(0.857);">0,00</span>
<span class="t" style="top:398.00px;left:657.53px;transform-origin:0 0;transform:scaleX(0.857);">1,0047</span>
<span class="t" style="top:398.00px;left:869.84px;transform-origin:0 0;transform:scaleX(0.857);">0,00</span>
<span class="t" style="top:398.00px;left:1083.54px;transform-origin:0 0;transform:scaleX(0.857);">1</span>
<span class="t" style="top:398.00px;left:1268.94px;transform-origin:0 0;transform:scaleX(0.857);">0,00</span>
<div style="left:5px;top:418px;width:9px;height:9px;border:1px solid #7c7c7c;background:#fff"><div style="left:1px;top:3px;width:5px;height:1px;background:#000"></div></div>
<span class="t" style="top:416.00px;left:21.1px;transform-origin:0 0;transform:scaleX(0.8812);">Иные прочие работы и затраты</span>
<span class="t" style="top:416.00px;font-weight:bold;left:466.17px;transform-origin:0 0;transform:scaleX(1.02);">0,00</span>
<span class="t" style="top:416.00px;left:657.53px;transform-origin:0 0;transform:scaleX(0.857);">1,0047</span>
<span class="t" style="top:416.00px;font-weight:bold;left:866.17px;transform-origin:0 0;transform:scaleX(1.02);">0,00</span>
<span class="t" style="top:416.00px;left:1083.54px;transform-origin:0 0;transform:scaleX(0.857);">1</span>
<span class="t" style="top:416.00px;font-weight:bold;left:1265.17px;transform-origin:0 0;transform:scaleX(1.02);">0,00</span>
<div style="left:34px;top:431px;width:1258px;height:18px;background:#f8fdf8"></div>
<div style="left:34px;top:433px;width:16px;height:14px;background:linear-gradient(#cde0ff,#dce8fb 45%,#f0f0f0 80%);border:1px solid #a4a4a4;border-top-color:#c4c4c4;border-left-color:#bcbcbc"><span style="left:2.300px;top:-1.500px;font-size:9.500px;line-height:12px;letter-spacing:-0.200px;color:#3c3c3c">pp</span></div>
<span class="t" style="top:432.00px;left:53.1px;transform-origin:0 0;transform:scaleX(0.8812);">Иные прочие работы и затраты</span>
<span class="t" style="top:434.00px;left:469.84px;transform-origin:0 0;transform:scaleX(0.857);">0,00</span>
<span class="t" style="top:434.00px;left:657.53px;transform-origin:0 0;transform:scaleX(0.857);">1,0047</span>
<span class="t" style="top:434.00px;left:869.84px;transform-origin:0 0;transform:scaleX(0.857);">0,00</span>
<span class="t" style="top:434.00px;left:1083.54px;transform-origin:0 0;transform:scaleX(0.857);">1</span>
<span class="t" style="top:434.00px;left:1268.94px;transform-origin:0 0;transform:scaleX(0.857);">0,00</span>
<div style="left:5px;top:454px;width:9px;height:9px;border:1px solid #7c7c7c;background:#fff"><div style="left:1px;top:3px;width:5px;height:1px;background:#000"></div></div>
<span class="t" style="top:452.00px;left:21.1px;transform-origin:0 0;transform:scaleX(0.8831);">Титульные временные здания и сооружения</span>
<span class="t" style="top:452.00px;font-weight:bold;left:466.17px;transform-origin:0 0;transform:scaleX(1.02);">0,00</span>
<span class="t" style="top:452.00px;left:657.53px;transform-origin:0 0;transform:scaleX(0.857);">1,0047</span>
<span class="t" style="top:452.00px;font-weight:bold;left:866.17px;transform-origin:0 0;transform:scaleX(1.02);">0,00</span>
<span class="t" style="top:452.00px;left:1083.54px;transform-origin:0 0;transform:scaleX(0.857);">1</span>
<span class="t" style="top:452.00px;font-weight:bold;left:1265.17px;transform-origin:0 0;transform:scaleX(1.02);">0,00</span>
<div style="left:34px;top:467px;width:1258px;height:16px;background:#f8fdf8"></div>
<div style="left:34px;top:469px;width:16px;height:14px;background:linear-gradient(#cde0ff,#dce8fb 45%,#f0f0f0 80%);border:1px solid #a4a4a4;border-top-color:#c4c4c4;border-left-color:#bcbcbc"><span style="left:2.300px;top:-1.500px;font-size:9.500px;line-height:12px;letter-spacing:-0.200px;color:#3c3c3c">pp</span></div>
<span class="t" style="top:468.00px;left:53.5px;transform-origin:0 0;transform:scaleX(0.8815);">Титульные временные здания и сооружения</span>
<span class="t" style="top:470.00px;left:469.84px;transform-origin:0 0;transform:scaleX(0.857);">0,00</span>
<span class="t" style="top:470.00px;left:657.53px;transform-origin:0 0;transform:scaleX(0.857);">1,0047</span>
<span class="t" style="top:470.00px;left:869.84px;transform-origin:0 0;transform:scaleX(0.857);">0,00</span>
<span class="t" style="top:470.00px;left:1083.54px;transform-origin:0 0;transform:scaleX(0.857);">1</span>
<span class="t" style="top:470.00px;left:1268.94px;transform-origin:0 0;transform:scaleX(0.857);">0,00</span>
<div style="left:18px;top:486px;width:1274px;height:85px;background:#f0f0f0"></div>
<span class="t" style="top:488.00px;font-weight:bold;left:21.1px;transform-origin:0 0;transform:scaleX(0.9588);">Резерв средств на непредвиденные работы</span>
<span class="t" style="top:501.00px;font-weight:bold;left:21.1px;transform-origin:0 0;transform:scaleX(0.9663);">и затраты 0%</span>
<span class="t" style="top:488.00px;font-weight:bold;color:#0066cc;left:466.17px;transform-origin:0 0;transform:scaleX(1.02);">0,00</span>
<span class="t" style="top:488.00px;font-weight:bold;color:#0066cc;left:866.17px;transform-origin:0 0;transform:scaleX(1.02);">0,00</span>
<span class="t" style="top:488.00px;font-weight:bold;color:#0066cc;left:1265.17px;transform-origin:0 0;transform:scaleX(1.02);">0,00</span>
<span class="t" style="top:519.00px;font-weight:bold;left:21.1px;transform-origin:0 0;transform:scaleX(0.9778);">Стоимость без учета НДС</span>
<span class="t" style="top:519.00px;font-weight:bold;color:#0066cc;left:416.54px;transform-origin:0 0;transform:scaleX(1.02);">6 219 249,50</span>
<span class="t" style="top:519.00px;font-weight:bold;color:#0066cc;left:816.54px;transform-origin:0 0;transform:scaleX(1.02);">6 248 479,97</span>
<span class="t" style="top:519.00px;font-weight:bold;color:#0066cc;left:1215.54px;transform-origin:0 0;transform:scaleX(1.02);">6 248 479,97</span>
<span class="t" style="top:537.00px;font-weight:bold;left:21.1px;transform-origin:0 0;transform:scaleX(0.981);">НДС 20%</span>
<span class="t" style="top:537.00px;font-weight:bold;color:#0066cc;left:416.54px;transform-origin:0 0;transform:scaleX(1.02);">1 243 849,90</span>
<span class="t" style="top:537.00px;font-weight:bold;color:#0066cc;left:816.54px;transform-origin:0 0;transform:scaleX(1.02);">1 249 695,99</span>
<span class="t" style="top:537.00px;font-weight:bold;color:#0066cc;left:1215.54px;transform-origin:0 0;transform:scaleX(1.02);">1 249 695,99</span>
<span class="t" style="top:555.00px;font-weight:bold;left:21.1px;transform-origin:0 0;transform:scaleX(0.9729);">Стоимость с учетом НДС</span>
<span class="t" style="top:555.00px;font-weight:bold;color:#0066cc;left:416.54px;transform-origin:0 0;transform:scaleX(1.02);">7 463 099,40</span>
<span class="t" style="top:555.00px;font-weight:bold;color:#0066cc;left:816.54px;transform-origin:0 0;transform:scaleX(1.02);">7 498 175,97</span>
<span class="t" style="top:555.00px;font-weight:bold;color:#0066cc;left:1215.54px;transform-origin:0 0;transform:scaleX(1.02);">7 498 175,97</span>
<div style="left:2px;top:588px;width:1289px;height:31px;background:#f0f0f0;border-bottom:1px solid #a0a0a0"></div>
<div style="left:1291px;top:588px;width:1px;height:31px;background:#a0a0a0"></div>
<div style="left:491px;top:588px;width:1px;height:30px;background:#a0a0a0"></div>
<div style="left:492px;top:588px;width:1px;height:30px;background:#fff"></div>
<div style="left:691px;top:588px;width:1px;height:30px;background:#a0a0a0"></div>
<div style="left:692px;top:588px;width:1px;height:30px;background:#fff"></div>
<div style="left:891px;top:588px;width:1px;height:30px;background:#a0a0a0"></div>
<div style="left:892px;top:588px;width:1px;height:30px;background:#fff"></div>
<div style="left:1091px;top:588px;width:1px;height:30px;background:#a0a0a0"></div>
<div style="left:1092px;top:588px;width:1px;height:30px;background:#fff"></div>
<span class="t" style="top:590.00px;left:511.75px;transform-origin:0 0;transform:scaleX(0.88);">Индекс фактической инфляции</span>
<span class="t" style="top:603.00px;left:568.63px;transform-origin:0 0;transform:scaleX(0.88);">(Росстат)</span>
<span class="t" style="top:590.00px;left:915.84px;transform-origin:0 0;transform:scaleX(0.88);">Индекс прогнозной инфляции</span>
<span class="t" style="top:603.00px;left:934.92px;transform-origin:0 0;transform:scaleX(0.88);">(МинЭкономРазвития)</span>
<span class="t" style="top:590.00px;left:1127.0px;transform-origin:0 0;transform:scaleX(0.9072);">Доля сметной стоимости</span>
<div style="left:5px;top:624px;width:9px;height:9px;border:1px solid #7c7c7c;background:#fff"><div style="left:1px;top:3px;width:5px;height:1px;background:#000"></div></div>
<span class="t" style="top:622.00px;font-weight:bold;left:20.8px;transform-origin:0 0;transform:scaleX(0.9639);">Расчет индекса фактической инфляции</span>
<div style="left:21px;top:642px;width:9px;height:9px;border:1px solid #7c7c7c;background:#fff"><div style="left:1px;top:3px;width:5px;height:1px;background:#000"></div></div>
<span class="t" style="top:638.00px;left:302.7px;transform-origin:0 0;transform:scaleX(0.8803);">Переход от Март 2025 к Апрель 2025</span>
<span class="t" style="top:656.00px;left:413.1px;transform-origin:0 0;transform:scaleX(0.879);">на Апрель 2025</span>
<span class="t" style="top:658.00px;left:657.53px;transform-origin:0 0;transform:scaleX(0.857);">1,0047</span>
<span class="t" style="top:674.00px;font-weight:bold;left:262.8px;transform-origin:0 0;transform:scaleX(0.9612);">Итого индекс фактической инфляции:</span>
<span class="t" style="top:692.00px;left:459.0px;transform-origin:0 0;transform:scaleX(0.8866);">1,0047</span>
<span class="t" style="top:692.00px;font-weight:bold;left:655.29px;transform-origin:0 0;transform:scaleX(0.96);">1,0047</span>
<div style="left:5px;top:714px;width:9px;height:9px;border:1px solid #7c7c7c;background:#fff"><div style="left:1px;top:3px;width:5px;height:1px;background:#000"></div></div>
<span class="t" style="top:712.00px;font-weight:bold;left:20.8px;transform-origin:0 0;transform:scaleX(0.9636);">Расчет индекса прогнозной инфляции</span>
<span class="t" style="top:728.00px;font-weight:bold;left:246.0px;transform-origin:0 0;transform:scaleX(0.9445);">Годовые индексы прогнозной инфляции:</span>
<div style="left:21px;top:750px;width:9px;height:9px;border:1px solid #7c7c7c;background:#fff"><div style="left:1px;top:3px;width:5px;height:1px;background:#000"></div></div>
<span class="t" style="top:746.00px;left:291.9px;transform-origin:0 0;transform:scaleX(0.8794);">Переход от Апрель 2025 к Апрель 2026</span>
<span class="t" style="top:748.00px;font-weight:bold;left:1127.0px;transform-origin:0 0;transform:scaleX(1.0122);">Сумма = 7 498 175,97</span>
<span class="t" style="top:764.00px;left:368.9px;transform-origin:0 0;transform:scaleX(0.8857);">на 2025 год (8 мес. стр.)</span>
<span class="t" style="top:766.00px;left:1082.88px;transform-origin:0 0;transform:scaleX(0.88);">1</span>
<span class="t" style="top:766.00px;left:1131.91px;transform-origin:0 0;transform:scaleX(0.88);">66,67%  =  4 998 783,98</span>
<span class="t" style="top:782.00px;left:368.9px;transform-origin:0 0;transform:scaleX(0.8857);">на 2026 год (4 мес. стр.)</span>
<span class="t" style="top:784.00px;left:1082.88px;transform-origin:0 0;transform:scaleX(0.88);">1</span>
<span class="t" style="top:784.00px;left:1131.91px;transform-origin:0 0;transform:scaleX(0.88);">33,33%  =  2 499 391,99</span>
<span class="t" style="top:800.00px;font-weight:bold;left:214.1px;transform-origin:0 0;transform:scaleX(0.9511);">Ежемесячные индексы прогнозной инфляции:</span>
<div style="left:21px;top:822px;width:9px;height:9px;border:1px solid #7c7c7c;background:#fff"><div style="left:1px;top:3px;width:5px;height:1px;background:#000"></div></div>
<span class="t" style="top:818.00px;left:291.9px;transform-origin:0 0;transform:scaleX(0.8794);">Переход от Апрель 2025 к Апрель 2026</span>
<span class="t" style="top:836.00px;left:433.1px;transform-origin:0 0;transform:scaleX(0.8852);">на 2025 год</span>
<svg style="left:692px;top:838px" width="26" height="23" viewBox="0 0 26 23"><path d="M4 9.700h4" stroke="#000" stroke-width="1"/><path d="M6.400 9.200h2.400l-0.700 8.500-0.700 3.600z" fill="#000"/><path d="M7.500 21.200l7.400-16.400h9.200v2.300" fill="none" stroke="#000" stroke-width="1.100"/><text x="1.500" y="6.800" font-family="Liberation Serif" font-size="8" fill="#8a8a8a">12</text><text x="15.300" y="16" font-family="Liberation Serif" font-size="11.500" fill="#333">1</text></svg>
<span class="t" style="top:838.00px;left:1082.88px;transform-origin:0 0;transform:scaleX(0.88);">1</span>
<span class="t" style="top:867.00px;left:433.1px;transform-origin:0 0;transform:scaleX(0.8852);">на 2026 год</span>
<svg style="left:692px;top:869px" width="26" height="23" viewBox="0 0 26 23"><path d="M4 9.700h4" stroke="#000" stroke-width="1"/><path d="M6.400 9.200h2.400l-0.700 8.500-0.700 3.600z" fill="#000"/><path d="M7.500 21.200l7.400-16.400h9.200v2.300" fill="none" stroke="#000" stroke-width="1.100"/><text x="1.500" y="6.800" font-family="Liberation Serif" font-size="8" fill="#8a8a8a">12</text><text x="15.300" y="16" font-family="Liberation Serif" font-size="11.500" fill="#333">1</text></svg>
<span class="t" style="top:869.00px;left:1082.88px;transform-origin:0 0;transform:scaleX(0.88);">1</span>
<span class="t" style="top:898.00px;font-weight:bold;left:270.7px;transform-origin:0 0;transform:scaleX(0.9613);">Итого индекс прогнозной инфляции:</span>
<span class="t" style="top:918.00px;color:#0066cc;text-decoration:underline;left:350.5px;transform-origin:0 0;transform:scaleX(0.8794);">Рассчитано с учетом долей</span>
<span class="t" style="top:918.00px;left:814.84px;transform-origin:0 0;transform:scaleX(0.88);">1*0,67 + 1*0,33</span>
<span class="t" style="top:918.00px;font-weight:bold;left:1082.33px;transform-origin:0 0;transform:scaleX(0.96);">1</span>
<div style="left:1370px;top:101px;width:385px;height:951px;background:#f0f0f0;border-top:1px solid #fff"></div>
<span class="t" style="top:117.00px;font-weight:bold;left:1385.0px;transform-origin:0 0;transform:scaleX(0.9676);">Параметры</span>
<span class="t" style="top:149.00px;left:1385.0px;transform-origin:0 0;transform:scaleX(0.8854);">Дата утверждения сметной документации:</span>
<div style="left:1385px;top:168px;width:169px;height:19px;background:#f4f7fc;border:1px solid #a0a0a0;border-right-color:#fff;border-bottom-color:#fff"></div>
<div style="left:1538px;top:170px;width:15px;height:15px;background:#f0f0f0;border:1px solid #fff;border-right-color:#888;border-bottom-color:#888"><div style="left:2.500px;top:4.500px;width:0;height:0;border-left:4px solid transparent;border-right:4px solid transparent;border-top:4.500px solid #a0a0a0"></div></div>
<span class="t" style="top:172.00px;color:#727272;left:1388.2px;transform-origin:0 0;transform:scaleX(0.8725);">Март 2025</span>
<span class="t" style="top:205.00px;left:1385.0px;transform-origin:0 0;transform:scaleX(0.8917);">Регион:</span>
<div style="left:1385px;top:224px;width:361px;height:19px;background:#f4f7fc;border:1px solid #a0a0a0;border-right-color:#fff;border-bottom-color:#fff"></div>
<div style="left:1730px;top:226px;width:15px;height:15px;background:#f0f0f0;border:1px solid #fff;border-right-color:#888;border-bottom-color:#888"><div style="left:2.500px;top:4.500px;width:0;height:0;border-left:4px solid transparent;border-right:4px solid transparent;border-top:4.500px solid #a0a0a0"></div></div>
<span class="t" style="top:229.00px;color:#727272;left:1388.2px;transform-origin:0 0;transform:scaleX(0.9105);">Российская Федерация</span>
<div style="left:1385px;top:259px;width:362px;height:1px;background:#a0a0a0"></div>
<div style="left:1385px;top:260px;width:362px;height:1px;background:#fff"></div>
<span class="t" style="top:269.00px;left:1385.0px;transform-origin:0 0;transform:scaleX(0.8896);">Дата формирования контракта:</span>
<span class="t" style="top:269.00px;left:1576.7px;transform-origin:0 0;transform:scaleX(0.8765);">Индекс фактической инфляции:</span>
<div style="left:1387px;top:290px;width:166px;height:16px;background:#fff"></div>
<div style="left:1541px;top:296px;width:0;height:0;border-left:4.5px solid transparent;border-right:4.5px solid transparent;border-top:5px solid #000"></div>
<span class="t" style="top:292.00px;left:1387.8px;transform-origin:0 0;transform:scaleX(0.8835);">Апрель 2025</span>
<div style="left:1577px;top:288px;width:170px;height:19px;background:#f0f2f8;border:1px solid #909090;border-right-color:#fff;border-bottom-color:#fff"></div>
<span class="t" style="top:292.00px;color:#787878;left:1710.35px;transform-origin:0 0;transform:scaleX(0.88);">1,0047</span>
<span class="t" style="top:325.00px;left:1385.0px;transform-origin:0 0;transform:scaleX(0.8647);">Начало выполнения работ:</span>
<span class="t" style="top:325.00px;left:1576.7px;transform-origin:0 0;transform:scaleX(0.883);">Индекс прогнозной инфляции:</span>
<div style="left:1387px;top:354px;width:166px;height:16px;background:#fff"></div>
<div style="left:1541px;top:360px;width:0;height:0;border-left:4.5px solid transparent;border-right:4.5px solid transparent;border-top:5px solid #000"></div>
<span class="t" style="top:356.00px;left:1387.8px;transform-origin:0 0;transform:scaleX(0.8802);">Май 2025</span>
<div style="left:1577px;top:352px;width:170px;height:19px;background:#f0f2f8;border:1px solid #909090;border-right-color:#fff;border-bottom-color:#fff"></div>
<span class="t" style="top:356.00px;color:#787878;left:1735.38px;transform-origin:0 0;transform:scaleX(0.88);">1</span>
<span class="t" style="top:389.00px;left:1385.0px;transform-origin:0 0;transform:scaleX(0.8684);">Окончание выполнения работ:</span>
<div style="left:1387px;top:418px;width:166px;height:16px;background:#fff"></div>
<div style="left:1541px;top:424px;width:0;height:0;border-left:4.5px solid transparent;border-right:4.5px solid transparent;border-top:5px solid #000"></div>
<span class="t" style="top:420.00px;left:1387.8px;transform-origin:0 0;transform:scaleX(0.8835);">Апрель 2026</span>
<div style="left:1385px;top:443px;width:362px;height:1px;background:#a0a0a0"></div>
<div style="left:1385px;top:444px;width:362px;height:1px;background:#fff"></div>
<span class="t" style="top:461.00px;font-weight:bold;left:1385.0px;transform-origin:0 0;transform:scaleX(0.9622);">Начисления</span>
<span class="t" style="top:493.00px;left:1385.0px;transform-origin:0 0;transform:scaleX(0.8658);">Резерв, %:</span>
<span class="t" style="top:493.00px;left:1576.7px;transform-origin:0 0;transform:scaleX(0.8593);">НДС, %:</span>
<div style="left:1387px;top:522px;width:166px;height:15px;background:#fff"></div>
<span class="t" style="top:524.00px;left:1544.88px;transform-origin:0 0;transform:scaleX(0.88);">0</span>
<div style="left:1579px;top:522px;width:167px;height:15px;background:#fff"></div>
<span class="t" style="top:524.00px;left:1730.76px;transform-origin:0 0;transform:scaleX(0.88);">20</span>
<svg style="left:0;top:0" width="1755" height="1118" viewBox="0 0 1755 1118"><rect x="12" y="483.900" width="1282.800" height="88.600" fill="none" stroke="#ff0000" stroke-width="3.200"/><rect x="1370" y="455" width="380" height="86" fill="none" stroke="#ff0000" stroke-width="3.200"/><path d="M1369.500 488.300L1313 521.500" stroke="#ff0000" stroke-width="3"/><path d="M1297.600 532L1312 512.700L1321.500 526.800z" fill="#ff0000"/></svg>
<div style="left:1370px;top:1051px;width:384px;height:1px;background:#a0a0a0"></div>
<div style="left:1370px;top:1052px;width:384px;height:1px;background:#fff"></div>
<div style="left:1560px;top:1056px;width:95px;height:25px;background:#f0f0f0;border:1px solid #fff;border-right-color:#696969;border-bottom-color:#696969"><div style="left:0;top:0;right:0;bottom:0;border:1px solid #f0f0f0;border-right-color:#a0a0a0;border-bottom-color:#a0a0a0"></div></div>
<span class="t" style="top:1062.00px;left:1580.08px;transform-origin:0 0;transform:scaleX(0.88);">Применить</span>
<div style="left:1657px;top:1056px;width:95px;height:25px;background:#f0f0f0;border:1px solid #fff;border-right-color:#696969;border-bottom-color:#696969"><div style="left:0;top:0;right:0;bottom:0;border:1px solid #f0f0f0;border-right-color:#a0a0a0;border-bottom-color:#a0a0a0"></div></div>
<span class="t" style="top:1062.00px;left:1685.76px;transform-origin:0 0;transform:scaleX(0.88);">Отмена</span>
<div style="left:1px;top:1087px;width:1753px;height:2px;background:#fff"></div>
<div style="left:1px;top:1052px;width:1px;height:64px;background:#fff"></div>
<div style="left:2px;top:1089px;width:2px;height:26px;background:#fff"></div>
<div style="left:4px;top:1089px;width:85px;height:26px;border:1px solid #a0a0a0;border-right-color:#fff;border-bottom-color:#fff"></div>
<div style="left:92px;top:1089px;width:298px;height:26px;border:1px solid #a0a0a0;border-right-color:#fff;border-bottom-color:#fff"></div>
<div style="left:392px;top:1089px;width:1295px;height:26px;border:1px solid #a0a0a0;border-right-color:#fff;border-bottom-color:#fff"></div>
<div style="left:1689px;top:1089px;width:31px;height:26px;border:1px solid #a0a0a0;border-right-color:#fff;border-bottom-color:#fff"></div>
<div style="left:1722px;top:1089px;width:31px;height:26px;border:1px solid #a0a0a0;border-right-color:#fff;border-bottom-color:#fff"></div>
<svg style="left:1695px;top:1093px" width="18" height="18" viewBox="0 0 18 18"><rect x="1" y="1" width="16" height="16" rx="5" fill="#9c9c9c"/><rect x="8" y="7.500" width="2" height="6.500" fill="#fff"/><rect x="8" y="4" width="2" height="2" fill="#fff"/><path d="M1 1l16 16" stroke="#f00" stroke-width="2"/></svg>
<span class="m" style="top:1095.00px;font-size:12.5px;left:1729.7px;transform:scaleX(0.8471);transform-origin:0 0;">RU</span>
<div style="left:0px;top:1116px;width:1755px;height:2px;background:#8c8c8c"></div>
<div style="left:0px;top:1051px;width:1px;height:65px;background:#8c8c8c"></div>
</body></html>
